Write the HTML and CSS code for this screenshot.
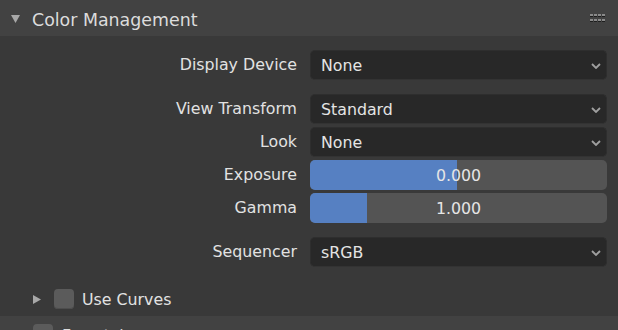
FILE: index.html
```html
<!DOCTYPE html>
<html lang="en">
<head>
  <meta charset="UTF-8">
  <title>Color Management</title>
  <link rel="stylesheet" href="styles.css">
</head>
<body>
  <div class="panel">
    <div class="panel-header">
      <svg class="disclosure" width="9" height="8" viewBox="0 0 9 8"><polygon points="0,0 9,0 4.5,8" fill="#a8a8a8"/></svg>
      <span class="panel-title">Color Management</span>
      <svg class="grip" width="15" height="8" viewBox="0 0 15 8">
        <g fill="#8a8a8a">
          <rect x="0" y="0" width="3" height="2"/><rect x="4" y="0" width="3" height="2"/>
          <rect x="8" y="0" width="3" height="2"/><rect x="12" y="0" width="3" height="2"/>
          <rect x="0" y="5" width="3" height="2"/><rect x="4" y="5" width="3" height="2"/>
          <rect x="8" y="5" width="3" height="2"/><rect x="12" y="5" width="3" height="2"/>
        </g>
        <g fill="#1e1e1e">
          <rect x="0" y="2" width="3" height="1"/><rect x="4" y="2" width="3" height="1"/>
          <rect x="8" y="2" width="3" height="1"/><rect x="12" y="2" width="3" height="1"/>
          <rect x="0" y="7" width="3" height="1"/><rect x="4" y="7" width="3" height="1"/>
          <rect x="8" y="7" width="3" height="1"/><rect x="12" y="7" width="3" height="1"/>
        </g>
      </svg>
    </div>

    <div class="panel-body">
      <div class="group">
        <div class="prop-row">
          <label>Display Device</label>
          <div class="dropdown"><span>None</span>
            <svg class="chevron" width="10" height="6" viewBox="0 0 10 6"><polyline points="1,1 5,5 9,1" fill="none" stroke="#a0a0a0" stroke-width="1.8"/></svg>
          </div>
        </div>
      </div>

      <div class="group">
        <div class="prop-row">
          <label>View Transform</label>
          <div class="dropdown"><span>Standard</span>
            <svg class="chevron" width="10" height="6" viewBox="0 0 10 6"><polyline points="1,1 5,5 9,1" fill="none" stroke="#a0a0a0" stroke-width="1.8"/></svg>
          </div>
        </div>
        <div class="prop-row">
          <label>Look</label>
          <div class="dropdown"><span>None</span>
            <svg class="chevron" width="10" height="6" viewBox="0 0 10 6"><polyline points="1,1 5,5 9,1" fill="none" stroke="#a0a0a0" stroke-width="1.8"/></svg>
          </div>
        </div>
        <div class="prop-row">
          <label>Exposure</label>
          <div class="slider">
            <div class="slider-fill" style="width: 49.5%"></div>
            <span class="slider-value">0.000</span>
          </div>
        </div>
        <div class="prop-row">
          <label>Gamma</label>
          <div class="slider">
            <div class="slider-fill" style="width: 19.2%"></div>
            <span class="slider-value">1.000</span>
          </div>
        </div>
      </div>

      <div class="group">
        <div class="prop-row">
          <label>Sequencer</label>
          <div class="dropdown"><span>sRGB</span>
            <svg class="chevron" width="10" height="6" viewBox="0 0 10 6"><polyline points="1,1 5,5 9,1" fill="none" stroke="#a0a0a0" stroke-width="1.8"/></svg>
          </div>
        </div>
      </div>

      <div class="subpanel">
        <svg class="sub-disclosure" width="8" height="9" viewBox="0 0 8 9"><polygon points="0,0 8,4.5 0,9" fill="#a8a8a8"/></svg>
        <span class="checkbox"></span>
        <span class="sub-title">Use Curves</span>
      </div>
    </div>
  </div>

  <div class="panel-header next-panel">
    <span class="checkbox"></span>
    <span class="panel-title small">Freestyle</span>
  </div>
</body>
</html>
```

FILE: styles.css
```css
body {
  margin: 0;
  background-color: #393939;
  font-family: "DejaVu Sans", sans-serif;
  color: #e6e6e6;
  overflow: hidden;
}
.panel-header {
  height: 36px;
  background: #424242;
  display: flex;
  align-items: center;
  padding: 0 13px 0 11px;
}
.disclosure {
  margin-right: 12px;
  margin-top: 1px;
}
.panel-title {
  font-size: 17.4px;
  line-height: 36px;
  padding-top: 3px;
  color: #dcdcdc;
  flex: 1;
}
.panel-body {
  padding: 14px 11px 0 0;
}
.group {
  display: flex;
  flex-direction: column;
  gap: 4px;
  margin-bottom: 15px;
}
.prop-row {
  display: grid;
  grid-template-columns: 297px 1fr;
  column-gap: 13px;
  height: 29px;
}
.prop-row label {
  text-align: right;
  font-size: 15.8px;
  line-height: 30px;
  color: #e2e2e2;
}
.dropdown {
  background: #282828;
  border: 1px solid #2e2e2e;
  border-bottom-color: #333;
  border-radius: 5px;
  display: flex;
  align-items: center;
  justify-content: space-between;
  padding: 1px 5px 0 10px;
  font-size: 15.8px;
  color: #e4e4e4;
}
.slider {
  position: relative;
  background: #545454;
  border-radius: 5px;
  overflow: hidden;
  display: flex;
  align-items: center;
  justify-content: center;
  padding-top: 1px;
}
.slider-fill {
  position: absolute;
  left: 0;
  top: 0;
  bottom: 0;
  background: #5680c2;
}
.slider-value {
  position: relative;
  font-size: 15.8px;
  color: #e6e6e6;
}
.subpanel {
  display: flex;
  align-items: center;
  height: 28px;
  margin-top: 19px;
  padding-left: 33px;
}
.sub-disclosure {
  margin-right: 13px;
}
.checkbox {
  width: 20px;
  height: 20px;
  border-radius: 4px;
  background: #5b5b5b;
  box-shadow: inset 0 -1px 0 #4d4d4d;
  margin-right: 8px;
}
.sub-title {
  font-size: 15.8px;
  padding-top: 1px;
  color: #e2e2e2;
}
.next-panel {
  margin-top: 3px;
  padding-left: 33px;
  align-items: flex-start;
  padding-top: 8px;
  box-sizing: border-box;
}
.panel-title.small {
  font-size: 15.8px;
  line-height: 20px;
  padding-top: 2px;
  margin-left: 1px;
}
```
